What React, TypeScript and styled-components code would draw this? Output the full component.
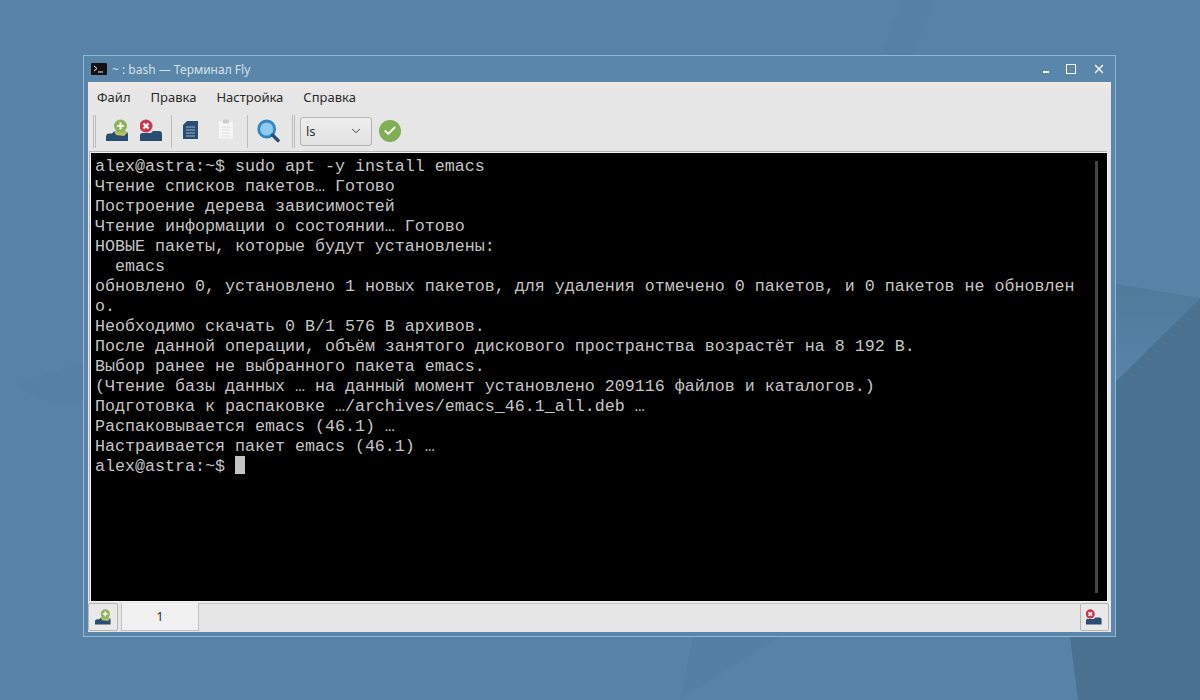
import styled, { createGlobalStyle } from "styled-components";
import { ChevronDown, Check } from "lucide-react";

const GlobalStyle = createGlobalStyle`
  html, body {
    margin: 0;
    padding: 0;
    height: 100%;
    overflow: hidden;
  }
`;

const Desktop = styled.div`
  position: relative;
  width: 1200px;
  height: 700px;
  padding: 55px 84px 0 83px;
  box-sizing: border-box;
  overflow: hidden;
  font-family: "Noto Sans", sans-serif;
  background: #5883a7;
`;

const Facet = styled.div<{ $shape: string; $fill: string }>`
  position: absolute;
  inset: 0;
  background: ${({ $fill }) => $fill};
  clip-path: polygon(${({ $shape }) => $shape});
`;

const Window = styled.div`
  position: relative;
  width: 1033px;
  height: 582px;
  box-sizing: border-box;
  border: 1px solid #8fb8d8;
  background: #5a86a9;
  padding: 0 4px 4px 4px;
  display: flex;
  flex-direction: column;
`;

const TitleBar = styled.div`
  height: 26px;
  flex: none;
  display: flex;
  align-items: center;
  padding: 0 8px 0 3px;
  color: #d5e1ea;
  font-size: 12px;
`;

const TermBadge = styled.svg`
  width: 16px;
  height: 12px;
  margin-right: 5px;
`;

const TitleText = styled.span`
  flex: 1;
`;

const WinButton = styled.svg<{ $w: number; $gap?: number }>`
  width: ${({ $w }) => $w}px;
  height: 10px;
  margin-left: ${({ $gap }) => $gap ?? 0}px;
  flex: none;
`;

const Client = styled.div`
  flex: 1;
  min-height: 0;
  background: #e6e6e6;
  display: flex;
  flex-direction: column;
`;

const MenuBar = styled.div`
  height: 29px;
  flex: none;
  display: flex;
  align-items: center;
  gap: 20px;
  padding: 0 0 0 9px;
  font-size: 13px;
  color: #2a2a2a;
  background: linear-gradient(#efe9e6, #e6e6e6 40%);
`;

const ToolBar = styled.div`
  height: 41px;
  flex: none;
  display: flex;
  align-items: center;
  box-sizing: border-box;
  padding: 0 0 1px 5px;
`;

const Sep = styled.div<{ $double?: boolean }>`
  width: ${({ $double }) => ($double ? "3px" : "1px")};
  height: 33px;
  flex: none;
  border-left: 1px solid #bdbdbd;
  border-right: ${({ $double }) => ($double ? "1px solid #bdbdbd" : "none")};
  box-sizing: border-box;
`;

const ToolGroup = styled.div<{ $left: number; $right: number; $gap?: number }>`
  display: flex;
  flex: none;
  align-items: center;
  gap: ${({ $gap }) => $gap ?? 0}px;
  padding: 0 ${({ $right }) => $right}px 0 ${({ $left }) => $left}px;
`;

const ToolIcon = styled.svg<{ $w?: number }>`
  width: ${({ $w }) => $w ?? 24}px;
  height: ${({ $w }) => $w ?? 24}px;
  flex: none;
  display: block;
`;

const Combo = styled.div`
  width: 72px;
  height: 29px;
  flex: none;
  margin-left: 5px;
  box-sizing: border-box;
  border: 1px solid #b3b3b3;
  border-radius: 3px;
  background: linear-gradient(#eeeeee, #e2e2e2);
  display: flex;
  align-items: center;
  justify-content: space-between;
  padding: 0 8px 0 5px;
  font-size: 13px;
  color: #333;
`;

const OkBadge = styled.div`
  width: 22px;
  height: 22px;
  margin-left: 7px;
  border-radius: 50%;
  background: #7fae55;
  display: flex;
  align-items: center;
  justify-content: center;
  color: #fff;
`;

const Terminal = styled.div`
  position: relative;
  flex: 1;
  min-height: 0;
  margin: 0 3px 0 2px;
  box-sizing: border-box;
  border: 1px solid #f4f4f4;
  box-shadow: -1px -1px 0 #b5b5b5;
  background: #000;
  padding: 4px 0 0 4px;
`;

const Output = styled.pre`
  margin: 0;
  font-family: "Liberation Mono", monospace;
  font-size: 16.67px;
  line-height: 20px;
  color: #c6c6c6;
`;

const Cursor = styled.span`
  display: inline-block;
  width: 10px;
  height: 18px;
  vertical-align: top;
  margin-top: -1px;
  background: #c4c4c4;
`;

const ScrollThumb = styled.div`
  position: absolute;
  top: 8px;
  bottom: 8px;
  right: 9px;
  width: 3px;
  background: #444;
`;

const TabBar = styled.div`
  height: 30px;
  flex: none;
  display: flex;
  align-items: flex-start;
  padding-top: 1px;
  box-sizing: border-box;
`;

const CornerButton = styled.div`
  width: 30px;
  height: 28px;
  flex: none;
  box-sizing: border-box;
  border: 1px solid #b5b5b5;
  border-radius: 2px;
  background: #e9e9e9;
  display: flex;
  align-items: center;
  justify-content: center;
`;

const Tab = styled.div`
  width: 78px;
  height: 28px;
  flex: none;
  margin-left: 3px;
  box-sizing: border-box;
  border: 1px solid #c2c2c2;
  border-top: none;
  background: #f1f1f1;
  display: flex;
  align-items: center;
  justify-content: center;
  font-size: 12px;
  color: #2a2a2a;
`;

const TabFill = styled.div`
  flex: 1;
  height: 28px;
  box-sizing: border-box;
  border-top: 1px solid #c8c8c8;
`;

const RightCorner = styled(CornerButton)`
  width: 29px;
  margin-right: 2px;
`;

const outputText = `alex@astra:~$ sudo apt -y install emacs
Чтение списков пакетов… Готово
Построение дерева зависимостей
Чтение информации о состоянии… Готово
НОВЫЕ пакеты, которые будут установлены:
  emacs
обновлено 0, установлено 1 новых пакетов, для удаления отмечено 0 пакетов, и 0 пакетов не обновлен
о.
Необходимо скачать 0 B/1 576 B архивов.
После данной операции, объём занятого дискового пространства возрастёт на 8 192 B.
Выбор ранее не выбранного пакета emacs.
(Чтение базы данных … на данный момент установлено 209116 файлов и каталогов.)
Подготовка к распаковке …/archives/emacs_46.1_all.deb …
Распаковывается emacs (46.1) …
Настраивается пакет emacs (46.1) …
alex@astra:~$ `;

const UserIcon = ({ kind, w = 24 }: { kind: "add" | "remove"; w?: number }) => (
  <ToolIcon viewBox="0 0 24 24" $w={w}>
    {kind === "add" ? (
      <>
        <path d="M0 22v-4c0-2 1-3.5 3-3.5h3l2-2h11c2 0 3 1 3 3V22z" fill="#2a4d72" />
        <path d="M8 12.5h11c1 0 2 .5 2 1.5l-3 3-8-1z" fill="#b5bf64" />
        <circle cx="14.5" cy="7" r="6.5" fill="#8db359" />
        <path d="M14.5 3.5v7M11 7h7" stroke="#f4f8ea" strokeWidth="2.2" />
      </>
    ) : (
      <>
        <path d="M0 22v-6c0-1 1-2 2-2h9l2-2h6c2 0 3 1 3 3v7z" fill="#2a4d72" />
        <circle cx="6" cy="7" r="6.5" fill="#c9384f" />
        <path d="M3.5 4.5l5 5M8.5 4.5l-5 5" stroke="#fff" strokeWidth="2.2" />
      </>
    )}
  </ToolIcon>
);

const App = () => {
  return (
    <Desktop>
      <GlobalStyle />
      <Facet
        $fill="linear-gradient(90deg, #4f7b9f 0, #5883a7 100%)"
        $shape="880px 55px, 903px 0, 935px 0, 915px 55px"
      />
      <Facet $fill="#4b7190" $shape="1200px 298px, 1116px 381px, 1070px 381px, 1070px 637px, 1078px 700px, 1200px 700px" />
      <Facet
        $fill="linear-gradient(#507a9a 284px, #5883a7 370px)"
        $shape="1116px 284px, 1200px 298px, 1116px 381px"
      />
      <Facet $fill="#5580a4" $shape="680px 700px, 693px 637px, 780px 637px, 686px 696px" />
      <Facet $fill="#5681a5" $shape="15px 385px, 83px 362px, 83px 402px, 48px 402px" />
      <Window>
        <TitleBar>
          <TermBadge viewBox="0 0 16 12">
            <rect width="16" height="12" rx="1" fill="#111" />
            <path d="M3 3l3 2.5L3 8M7 9h5" stroke="#eee" fill="none" strokeWidth="1" />
          </TermBadge>
          <TitleText>~ : bash — Терминал Fly</TitleText>
          <WinButton viewBox="0 0 6 10" $w={6}>
            <rect y="7" width="6" height="2" fill="#fff" />
          </WinButton>
          <WinButton viewBox="0 0 10 10" $w={10} $gap={17}>
            <rect x="0.5" y="0.5" width="9" height="9" fill="none" stroke="#fff" />
          </WinButton>
          <WinButton viewBox="0 0 8 8" $w={8} $gap={19}>
            <path d="M0 0l8 8M8 0L0 8" stroke="#fff" strokeWidth="1.3" />
          </WinButton>
        </TitleBar>
        <Client>
          <MenuBar>
            <span>Файл</span>
            <span>Правка</span>
            <span>Настройка</span>
            <span>Справка</span>
          </MenuBar>
          <ToolBar>
            <Sep $double />
            <ToolGroup $left={10} $right={7} $gap={10}>
              <UserIcon kind="add" />
              <UserIcon kind="remove" />
            </ToolGroup>
            <Sep />
            <ToolGroup $left={7} $right={8} $gap={12}>
              <ToolIcon viewBox="0 0 24 24">
                <path d="M8 2h11v18H4V6z" fill="#2a4d72" />
                <path d="M7 8h9M7 11h9M7 14h9M7 17h9" stroke="#9db1c4" strokeWidth="1.2" />
              </ToolIcon>
              <ToolIcon viewBox="0 0 24 24">
                <rect x="4" y="2.5" width="14" height="17" rx="1" fill="#f6f6f6" />
                <rect x="8" y="0.5" width="6" height="4" rx="1" fill="#cdcdcd" />
                <path d="M7 8h8M7 11h8M7 14h8M7 17h8" stroke="#dddddd" strokeWidth="1.2" />
              </ToolIcon>
            </ToolGroup>
            <Sep />
            <ToolGroup $left={8} $right={12}>
              <ToolIcon viewBox="0 0 24 24">
                <circle cx="10.7" cy="10" r="8" fill="#8fcbee" stroke="#2e86c8" strokeWidth="2.8" />
                <path d="M16.5 16L22 21.5" stroke="#2a4d72" strokeWidth="3.4" strokeLinecap="round" />
              </ToolIcon>
            </ToolGroup>
            <Sep $double />
            <Combo>
              <span>ls</span>
              <ChevronDown size={14} strokeWidth={1.6} />
            </Combo>
            <OkBadge>
              <Check size={14} strokeWidth={3.2} />
            </OkBadge>
          </ToolBar>
          <Terminal>
            <Output>
              {outputText}
              <Cursor />
            </Output>
            <ScrollThumb />
          </Terminal>
          <TabBar>
            <CornerButton>
              <UserIcon kind="add" w={17} />
            </CornerButton>
            <Tab>1</Tab>
            <TabFill />
            <RightCorner>
              <UserIcon kind="remove" w={17} />
            </RightCorner>
          </TabBar>
        </Client>
      </Window>
    </Desktop>
  );
};

export default App;
